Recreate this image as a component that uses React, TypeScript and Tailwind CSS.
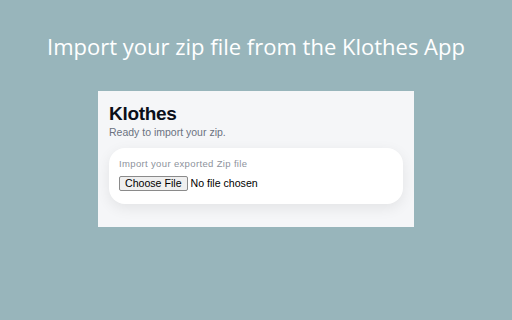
export default function App() {
  return (
    <div className="flex h-[320px] w-[512px] flex-col items-center bg-[#98b5bb] font-['Open_Sans',sans-serif]">
      <h1 className="mt-[31px] text-[22px] leading-[30px] text-white">
        Import your zip file from the Klothes App
      </h1>

      <div className="mt-[30px] flex h-[136px] w-[316px] flex-col bg-[#f5f6f8] px-[11px] pt-[12px] font-['Liberation_Sans',sans-serif]">
        <div className="text-[19px] font-bold leading-[22px] tracking-[-0.3px] text-[#0b0f19]">Klothes</div>
        <div className="text-[10.5px] leading-[14px] text-[#6b7280]">Ready to import your zip.</div>

        <div className="mt-[9px] flex h-[56px] flex-col rounded-[16px] bg-white px-[10px] pt-[10px] shadow-[0_4px_14px_rgba(0,0,0,0.08)]">
          <div className="text-[9.5px] font-normal leading-[12px] tracking-[0.35px] text-[#8d929c]">Import your exported Zip file</div>
          <div className="mt-[6px] flex items-center gap-[3px] text-[10.6px] text-black">
            <span className="rounded-[2px] border border-[#8a8a8a] bg-[#efefef] px-[5px] leading-[13px]">Choose File</span>
            <span className="leading-[13px]">No file chosen</span>
          </div>
        </div>
      </div>
    </div>
  );
}
